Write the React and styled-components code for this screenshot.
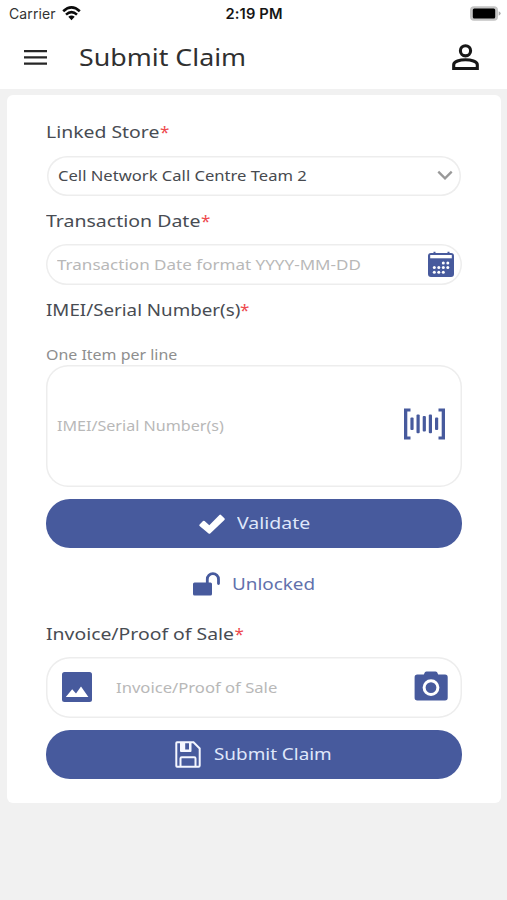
import React from 'react';
import styled, { createGlobalStyle } from 'styled-components';

const BLUE = '#475a9d';

const GlobalStyle = createGlobalStyle`
  * { box-sizing: border-box; }
  body { margin: 0; background: #f1f1f1; font-family: "Noto Sans", "Open Sans", sans-serif; }
`;

const Screen = styled.main`
  min-height: 900px;
  display: flex;
  flex-direction: column;
  background: #f1f1f1;
`;

const StatusBar = styled.div`
  height: 28px;
  padding: 0 6px 2px 9px;
  display: grid;
  grid-template-columns: 1fr auto 1fr;
  align-items: center;
  background: #fff;
  font-family: Inter, "Liberation Sans", sans-serif;
  color: #151515;
`;

const Carrier = styled.div`
  display: flex;
  align-items: center;
  gap: 6px;
  font-size: 14px;
  letter-spacing: 0.1px;
  color: #333;
`;

const Clock = styled.div`
  padding: 1px 2px 0 0;
  font-size: 14.7px;
  font-weight: 600;
  letter-spacing: 0.15px;
`;

const BatterySlot = styled.div`
  display: flex;
  justify-content: flex-end;
`;

const Header = styled.header`
  height: 61px;
  padding: 0 28px 3px 24px;
  display: flex;
  align-items: center;
  background: #fff;
  color: #262626;
`;

const Title = styled.h1`
  flex: 1;
  margin: 0 0 4px 32px;
  color: #303030;
  font-weight: 400;
  line-height: 30px;
`;

const Card = styled.section`
  margin: 6px 6px 0 7px;
  height: 708px;
  padding: 27px 39px 0;
  display: flex;
  flex-direction: column;
  background: #fff;
  border-radius: 6px;
`;

/* Wide-set text: reserves $w pixels and stretches the glyphs to fill them. */
const WideBox = styled.span`
  display: inline-block;
  width: ${p => p.$w}px;
  text-align: left;
  white-space: nowrap;
`;
const WideGlyphs = styled.span`
  display: inline-block;
  font-size: ${p => p.$size}px;
  transform: scaleX(${p => p.$stretch});
  transform-origin: 0 50%;
`;
const Wide = ({ w, size, stretch, children }) => (
  <WideBox $w={w}><WideGlyphs $size={size} $stretch={stretch}>{children}</WideGlyphs></WideBox>
);

const Label = styled.div`
  height: 20px;
  margin-top: ${p => p.$top || 0}px;
  display: flex;
  line-height: 20px;
  color: #484c53;
`;

const Required = styled.span`
  color: #ee4a4e;
  font-size: 17px;
  line-height: 20px;
`;

const Hint = styled.div`
  height: 18px;
  margin-top: 25px;
  line-height: 18px;
  color: #8e8e8e;
`;

const Field = styled.div`
  height: ${p => p.$h}px;
  margin: ${p => p.$top || 0}px ${p => p.$inset || 0}px 0;
  padding: 0 ${p => p.$right}px 1px ${p => p.$left}px;
  flex: none;
  display: flex;
  align-items: center;
  line-height: 20px;
  color: ${p => (p.$filled ? '#474a4f' : '#b8b8b8')};
  border-radius: ${p => p.$radius}px;
  box-shadow: inset 0 0 0 1.5px #ededed;
`;

const FieldText = styled.span`
  flex: 1;
  height: 20px;
  margin-bottom: 1px;
  padding-left: ${p => p.$indent || 0}px;
`;

const Button = styled.button`
  height: ${p => p.$h}px;
  margin: ${p => p.$top}px 0 0;
  padding: 0 0 0 ${p => p.$left}px;
  flex: none;
  display: flex;
  align-items: center;
  gap: ${p => p.$gap}px;
  border: 0;
  border-radius: 24px;
  background: ${BLUE};
  color: #dfe7fa;
  font-family: inherit;
  line-height: 22px;
`;

const LockStatus = styled.div`
  height: 26px;
  margin-top: 23px;
  padding-left: 147px;
  display: flex;
  align-items: center;
  gap: 11.5px;
  line-height: 22px;
  color: #6271ac;
`;

const Icon = styled.svg`
  display: block;
  flex: none;
`;

const Wifi = () => (
  <Icon width="19" height="15" viewBox="0 0 19 15" fill="none" stroke="#0b0b0b" strokeWidth="2.6">
    <path d="M1.2 5.3Q9.5-2.4 17.8 5.3M4 8.6Q9.5 3.7 15 8.6" />
    <path d="M9.5 14.3 6.3 10.8Q9.5 8.3 12.7 10.8Z" fill="#0b0b0b" stroke="none" />
  </Icon>
);

const Battery = () => (
  <Icon width="31" height="15" viewBox="0 0 31 15">
    <rect x="0" y=".3" width="28" height="14.4" rx="4" fill="#c4c4c4" />
    <rect x="2.8" y="2.6" width="22.4" height="9.8" rx="1.5" fill="#000" />
    <path d="M28.7 5.3q4 2.2 0 4.4Z" fill="#aaa" />
  </Icon>
);

const Menu = () => (
  <Icon width="23" height="17" viewBox="0 0 23 17" fill="#262626">
    <path d="M0 .9h23v2.3H0zM0 7.2h23v2.3H0zM0 13.5h23v2.3H0z" />
  </Icon>
);

const Person = () => (
  <Icon width="27" height="28" viewBox="0 0 27 28" fill="none" stroke="#171717" strokeWidth="3.1">
    <circle cx="13.5" cy="7.8" r="5.1" />
    <path d="M1.7 25.5v-3.7C1.7 18.5 8 16.8 13.5 16.8S25.3 18.5 25.3 21.8v3.7Z" />
  </Icon>
);

const Chevron = () => (
  <Icon width="16" height="11" viewBox="0 0 16 11" fill="none" stroke="#999" strokeWidth="2.3">
    <path d="m1.3 1.6 6.7 6.8 6.7-6.8" />
  </Icon>
);

const Calendar = () => (
  <Icon width="26" height="27" viewBox="0 0 26 27">
    <path d="M3 2h2.500V.8h2V2h12V.8h2V2H23q3 0 3 3v18q0 3-3 3H3q-3 0-3-3V5q0-3 3-3Z" fill={BLUE} />
    <path d="M2.2 4h21.6v3.3H2.2z" fill="#fff" />
    <g fill="#fff">
      {[[15.3, 12], [19.8, 12], [6.3, 16.6], [10.8, 16.6], [15.3, 16.6], [19.8, 16.6], [6.3, 21.2], [10.8, 21.2], [15.3, 21.2]].map(([x, y]) => (
        <circle key={`${x}-${y}`} cx={x} cy={y} r="1.5" />
      ))}
    </g>
  </Icon>
);

const Barcode = () => (
  <Icon width="41" height="35" viewBox="0 0 41 35" fill={BLUE}>
    <path d="M0 .5h6.5v3H3.3v25h3.2v3H0zM41 .5h-6.5v3h3.2v25h-3.2v3H41z" />
    <rect x="6.4" y="9.5" width="3.2" height="12.5" rx="1" />
    <rect x="12.5" y="6.5" width="3.2" height="18.8" rx="1" />
    <rect x="18.7" y="8" width="3.2" height="15.6" rx="1" />
    <rect x="24.8" y="6.5" width="3.2" height="18.8" rx="1" />
    <rect x="31" y="9.5" width="3.2" height="12.5" rx="1" />
  </Icon>
);

const Check = () => (
  <Icon width="26" height="20" viewBox="0 0 26 20" fill="#fff">
    <path d="M.6 10.5 4 7q.8-.7 1.6 0l4.7 4.3L20.4 1q.8-.8 1.6 0l3.4 3.3q.8.8 0 1.6L11.200 19.5q-.8.7-1.6 0L.6 12Q-.1 11.3.6 10.5Z" />
  </Icon>
);

const Unlock = () => (
  <Icon width="27" height="24" viewBox="0 0 27 24">
    <rect x="0" y="10.5" width="19" height="13" rx="1.5" fill={BLUE} />
    <path d="M14.3 11.5V7.3a5.6 5.6 0 0 1 11.2 0V11.5" fill="none" stroke={BLUE} strokeWidth="2.8" strokeLinecap="round" />
  </Icon>
);

const Picture = () => (
  <Icon width="30" height="30" viewBox="0 0 30 30">
    <rect width="30" height="30" rx="2.5" fill={BLUE} />
    <path d="m3.8 25 6.4-7.8 3.8 4.4 5-7L26.4 25Z" fill="#fff" />
  </Icon>
);

const Camera = () => (
  <Icon width="34" height="32" viewBox="0 0 34 32">
    <path d="M12.5.4h9q1 0 1.6.9l1.1 2.2H31q2.7 0 2.7 2.7v20.6q0 2.7-2.7 2.7H3.3Q.6 29.5.6 26.8V6.2Q.6 3.5 3.3 3.5H9.8l1.1-2.2Q11.500.4 12.5.4Z" fill={BLUE} />
    <circle cx="17" cy="16.6" r="6.9" fill="none" stroke="#fff" strokeWidth="3" />
  </Icon>
);

const Save = () => (
  <Icon width="26" height="27" viewBox="0 0 26 27" fill="none" stroke="#f4f6ff" strokeWidth="2">
    <path d="M2 1.3H18.5L24.7 7.5v17q0 1.2-1.2 1.2H2q-.7 0-.7-.7V2q0-.7.7-.7Z" />
    <path d="M5.5 25.5v-8q0-1.2 1.2-1.2h12.6q1.2 0 1.2 1.2v8" />
    <path d="M5 1.3V10q0 1 1 1h9.5q1 0 1-1V1.3H14v7.2h-3.8V1.3Z" fill="#f4f6ff" stroke="none" />
  </Icon>
);

export default function App() {
  return (
    <>
      <GlobalStyle />
      <Screen>
        <StatusBar>
          <Carrier>Carrier <Wifi /></Carrier>
          <Clock>2:19 PM</Clock>
          <BatterySlot><Battery /></BatterySlot>
        </StatusBar>
        <Header>
          <Menu />
          <Title><Wide w={170} size={23.5} stretch={1.14}>Submit Claim</Wide></Title>
          <Person />
        </Header>
        <Card>
          <Label><Wide w={114} size={16.5} stretch={1.175}>Linked Store</Wide><Required>*</Required></Label>
          <Field $h={40} $top={14} $inset={1} $left={11} $right={8} $radius={20} $filled>
            <FieldText><Wide w={250} size={14.7} stretch={1.13}>Cell Network Call Centre Team 2</Wide></FieldText>
            <Chevron />
          </Field>
          <Label $top={15}><Wide w={155} size={16.5} stretch={1.182}>Transaction Date</Wide><Required>*</Required></Label>
          <Field $h={41} $top={13} $left={11} $right={8} $radius={21}>
            <FieldText><Wide w={304} size={14.7} stretch={1.16}>Transaction Date format YYYY-MM-DD</Wide></FieldText>
            <Calendar />
          </Field>
          <Label $top={15}><Wide w={194} size={16.5} stretch={1.137}>IMEI/Serial Number(s)</Wide><Required>*</Required></Label>
          <Hint><Wide w={131} size={14.5} stretch={1.1}>One Item per line</Wide></Hint>
          <Field $h={122} $top={2} $left={11} $right={17} $radius={22}>
            <FieldText><Wide w={168} size={14.5} stretch={1.11}>IMEI/Serial Number(s)</Wide></FieldText>
            <Barcode />
          </Field>
          <Button $h={49} $top={12} $left={153} $gap={12}>
            <Check />
            <Wide w={75} size={17} stretch={1.145}>Validate</Wide>
          </Button>
          <LockStatus>
            <Unlock />
            <Wide w={84} size={17} stretch={1.11}>Unlocked</Wide>
          </LockStatus>
          <Label $top={27}><Wide w={188.5} size={16.5} stretch={1.175}>Invoice/Proof of Sale</Wide><Required>*</Required></Label>
          <Field $h={61} $top={13} $left={16} $right={14} $radius={24}>
            <Picture />
            <FieldText $indent={23.5}><Wide w={162} size={14.5} stretch={1.147}>Invoice/Proof of Sale</Wide></FieldText>
            <Camera />
          </Field>
          <Button $h={49} $top={12} $left={129} $gap={13}>
            <Save />
            <Wide w={118} size={17} stretch={1.11}>Submit Claim</Wide>
          </Button>
        </Card>
      </Screen>
    </>
  );
}
